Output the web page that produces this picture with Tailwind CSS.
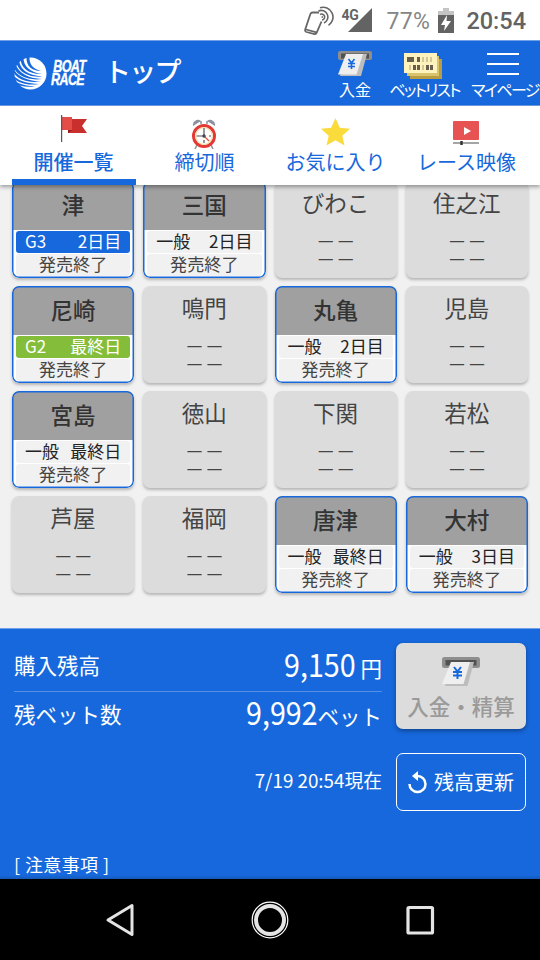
<!DOCTYPE html>
<html lang="ja">
<head>
    <meta charset="UTF-8">
    <meta name="viewport" content="width=device-width, initial-scale=1.0">
    <title>BOAT RACE トップ</title>
    <script src="https://cdn.jsdelivr.net/npm/@tailwindcss/browser@4"></script>
</head>
<body class="w-[540px] h-[960px] overflow-hidden bg-[#f1f1f1] font-['Noto_Sans_CJK_JP',sans-serif] flex flex-col">
    <!-- Status Bar -->
    <div class="h-[40px] shrink-0 bg-white flex items-center justify-end pr-3.5 pt-0.5 text-[#636363] font-['Roboto',sans-serif]">
        <svg class="w-[30px] h-[30px]" viewBox="0 0 30 30" fill="none" stroke="#666" stroke-width="1.800">
            <path d="M15 6.500H8.500Q7 6.500 6.400 8L1.200 23.500Q.8 25.500 2.500 26L10.500 28Q12 28.300 12.600 26.800L17.500 15.500" />
            <path d="M2 23.500l10.500 2.800" />
            <path d="M16 8.500a3 3 0 1 1 2 5.500M14.500 5a6.500 6.500 0 1 1 5.500 12M16 1.800a9.800 9.800 0 0 1 8.500 17.500M17.500 11h1.500" stroke-width="1.600" />
        </svg>
        <span class="text-[14px] font-bold ml-[7px] -mt-[13px] leading-none w-[16px] tracking-tight">4G</span>
        <svg class="w-[24px] h-[24px] -ml-[9px] mt-[-3px]" viewBox="0 0 24 24"><path d="M24 0v24H0z" fill="#636363" /></svg>
        <span class="text-[23px] leading-none ml-[14px] text-[#858585] tracking-[0.4px]">77%</span>
        <svg class="w-[16px] h-[25px] ml-[8px] -mt-[2px]" viewBox="0 0 16 25">
            <path d="M5 0h6v3h5v5H0V3h5z" fill="#c4c4c4" />
            <path d="M0 7h16v18H0z" fill="#636363" />
            <path d="M9 7 3 17h4l-1 6 7-10H8.500z" fill="#fff" />
        </svg>
        <span class="text-[23.500px] leading-none ml-[12px] mt-[2px] font-medium">20:54</span>
    </div>

    <!-- Header -->
    <header class="h-[66px] shrink-0 bg-[#1668dc] border-t border-b border-[#6f9fe8] text-white flex items-center pl-3.5">
        <svg class="w-[33px] h-[33px]" viewBox="0 0 33 33">
            <circle cx="16.500" cy="16.500" r="16" fill="#fff" />
            <g fill="#1668dc">
                <path d="M12.500 0h3C15 7 19 12 27 14 18 14 12 9 12.500 0z" />
                <path d="M6.500 0h3C9 9 16 15.500 28 17 15 17.500 6 11 6.500 0z" />
                <path d="M2 2h3C5 12 14 18.500 28 19.500 13 21 2 13 2 2z" />
                <path d="M-1 8h3C5 16 14 21.500 28 22 13 24 1 18 -1 8z" />
                <path d="M-1 14l2 0C5 20 14 24 27 24.500 13 26.500 2 22 -1 14z" />
                <path d="M-1 20h2C6 24.500 14 26.500 25 27 13 28.800 3 26 -1 20z" />
                <path d="M1 25.500h2C8 28 14 29 21 29.200 13 30.500 5 29.500 1 25.500z" />
            </g>
        </svg>
        <div class="ml-[4px] w-[39px] font-['Liberation_Sans',sans-serif] font-bold italic text-[16.500px] leading-[13px] tracking-[-0.8px]">
            <div class="origin-left scale-x-[0.760] pl-[3px] w-[50px] [-webkit-text-stroke:0.4px_white]">BOAT</div>
            <div class="origin-left scale-x-[0.760] w-[50px] [-webkit-text-stroke:0.4px_white]">RACE</div>
        </div>
        <h1 class="ml-[14px] -mt-[5px] w-[90px] text-[27px] leading-none font-medium tracking-[-1.800px]">トップ</h1>
        <nav class="ml-auto flex text-[16px] leading-[18px] text-center whitespace-nowrap [font-feature-settings:'palt'] pt-[3px]">
            <div class="w-[50px] flex flex-col items-center">
                <svg class="w-[34px] h-[27px] mb-[2px]" viewBox="0 0 34 27">
                    <rect x="0" y="0" width="34" height="9" rx="2" fill="#8e8e8e" />
                    <rect x="3" y="2.500" width="28" height="5" fill="#515151" />
                    <path d="M9 3h20l-6 22H2z" fill="#bdbdbd" />
                    <path d="M8 3h17l-6.500 20.500H0z" fill="#eee" />
                    <path d="M10.500 8l3 4 3-4M13.500 12v6M10 12.500h7M10 15.500h7" fill="none" stroke="#1668dc" stroke-width="1.600" />
                </svg>
                <span>入金</span>
            </div>
            <div class="w-[90px] flex flex-col items-center">
                <svg class="w-[38px] h-[26px] mr-[5px] mt-[2px] mb-px" viewBox="0 0 38 26">
                    <path d="M6 6h32v20H6z" fill="#b89d45" />
                    <path d="M3 3h32v20H3z" fill="#d9c36c" />
                    <path d="M0 0h33v20H0z" fill="#fff3bd" />
                    <path d="M3 4h7v5H3zM13 4h3v5h-3zM9 12h3v5H9zM13 12h3v5h-3zM22 12h3v5h-3zM26 12h3v5h-3z" fill="#665f4c" />
                    <path d="M18 4h2v5h-2zM22 4h2v5h-2zM26 4h2v5h-2zM5 12h2v5H5zM18 12h2v5h-2z" fill="#d3c796" />
                </svg>
                <span class="tracking-[-1.750px] pr-px">ベットリスト</span>
            </div>
            <div class="w-[70px] flex flex-col items-center">
                <svg class="w-[32px] h-[24px] mt-px mb-[4px] mr-[4px]" viewBox="0 0 32 24"><path d="M0 2h32M0 12h32M0 22h32" stroke="#fff" stroke-width="2" /></svg>
                <span class="tracking-[-1.600px]">マイページ</span>
            </div>
        </nav>
    </header>

    <!-- Tabs -->
    <div class="h-[79px] shrink-0 relative z-10 bg-white shadow-[0_2px_4px_rgba(0,0,0,0.35)] px-2 grid grid-cols-4 text-[20px] leading-[24px] text-[#1668dc] text-center whitespace-nowrap">
        <div class="relative flex flex-col items-center pt-[9px] font-medium">
            <svg class="w-[26px] h-[28px] mb-[7px]" viewBox="0 0 26 28">
                <path d="M7 4h19l-5 7 5 7H7z" fill="#c92f2c" />
                <path d="M1 2h10v13H1z" fill="#e54c48" />
                <path d="M7 15h4l-4 3z" fill="#8e1d1b" />
                <path d="M.6 0v27" stroke="#4d5860" stroke-width="1.200" />
            </svg>
            開催一覧
            <div class="absolute bottom-0 left-[4px] w-[124px] h-[6px] bg-[#1668dc]"></div>
        </div>
        <div class="flex flex-col items-center pt-[13px]">
            <svg class="w-[26px] h-[30px] mb-[1px] mr-[1px]" viewBox="0 0 26 30">
                <path d="M2 7a5 5 0 0 1 8-5zM24 7a5 5 0 0 0-8-5z" fill="#8b919d" />
                <path d="M6 26l-2 4M20 26l2 4M10 2v3M16 2v3" stroke="#8b919d" stroke-width="1.500" />
                <circle cx="13" cy="17" r="10.500" fill="#fff" stroke="#e53935" stroke-width="3" />
                <circle cx="13" cy="17" r="8.300" fill="none" stroke="#f0dfaa" stroke-width="1.200" />
                <path d="M13 9v8M5.500 17h4M13 24v-3M20 17h-2M9 17h4" stroke="#555" stroke-width="1.200" />
                <path d="M13 17l5 5" stroke="#e5532e" stroke-width="1.200" />
                <circle cx="13" cy="17" r="1.700" fill="#445" />
            </svg>
            締切順
        </div>
        <div class="flex flex-col items-center pt-[12px]">
            <svg class="w-[29px] h-[28px] mb-[4px]" viewBox="0 0 29 28"><path d="M14.500 0l4.300 9.700L29 10.700l-7.700 7L23.500 27.500l-9-5.200-9 5.200 2.200-9.800L0 10.700l10.200-1z" fill="#fadb3c" /></svg>
            お気に入り
        </div>
        <div class="flex flex-col items-center pt-[15px]">
            <svg class="w-[26px] h-[24px] mb-[5px] mr-[2px]" viewBox="0 0 26 24">
                <rect width="26" height="19" rx="1" fill="#e75252" />
                <path d="M11 6l7 4-7 4z" fill="#fff" />
                <path d="M0 22h26" stroke="#9b9b9b" stroke-width="1.800" />
                <path d="M8.500 20v4" stroke="#333" stroke-width="2.500" />
            </svg>
            レース映像
        </div>
    </div>

    <!-- Venue Grid -->
    <main class="h-[447px] shrink-0 -mt-[4px] px-[12px] grid grid-cols-4 auto-rows-[97px] gap-x-[9px] gap-y-[8px]" id="venue-list"></main>

    <!-- Balance Panel -->
    <section class="h-[251px] shrink-0 border-t border-[#6f9fe8] text-white px-3.5 flex gap-[14px] bg-linear-to-t from-[#1459b8] from-0% to-[#1668dc] to-[1.500%]">
        <div class="w-[368px] flex flex-col">
            <div class="h-[63px] pt-[9px] flex items-center justify-between border-b border-[#5590e6] text-[21.500px] leading-none">
                <span>購入残高</span>
                <span class="-mt-[2px]"><span class="inline-block origin-right scale-x-[0.910] text-[31.500px] leading-none">9,150</span> 円</span>
            </div>
            <div class="h-[44px] pb-px flex items-center justify-between text-[21.500px] leading-none">
                <span>残ベット数</span>
                <span class="-mt-[3px]"><span class="inline-block origin-right scale-x-[0.910] text-[31.500px] leading-none">9,992</span>ベット</span>
            </div>
            <div class="mt-[33px] text-right text-[18.800px] leading-[22px]">7/19 20:54現在</div>
            <div class="mt-auto mb-[4px] text-[18px] leading-[22px] tracking-[0.400px]">[ 注意事項 ]</div>
        </div>
        <div class="w-[130px] pt-[14px] flex flex-col">
            <button class="h-[86px] w-[130px] rounded-[7px] bg-[#dcdcdc] text-[#9a9a9a] shadow-[0_2px_4px_rgba(0,0,0,0.35)] flex flex-col items-center pt-[14px] text-[21.500px] leading-[30px] font-medium">
                <svg class="w-[38px] h-[30px] mb-[4px] shrink-0" viewBox="0 0 38 30">
                    <rect x="0" y="0" width="38" height="11" rx="2.500" fill="#8e8e8e" />
                    <rect x="3.500" y="3" width="31" height="5.500" fill="#515151" />
                    <path d="M12 5h20l-6.500 24H3z" fill="#bdbdbd" />
                    <path d="M9 5h19l-6.500 22H0z" fill="#efefef" />
                    <path d="M12 10l3.500 4.500L19 10M15.500 14v8M11 15h9M11 18.500h9" fill="none" stroke="#1668dc" stroke-width="2" />
                </svg>
                入金・精算
            </button>
            <button class="mt-[24px] h-[58px] w-[130px] rounded-[7px] border-[1.500px] border-white flex items-center justify-center gap-[7px] pb-px text-[20px] leading-none whitespace-nowrap">
                <svg class="w-[19px] h-[24px]" viewBox="0 0 19 24" fill="none" stroke="#fff" stroke-width="2.500">
                    <path d="M1.500 14a8 8 0 1 0 8-8H7" />
                    <path d="M10 1v10L4 6z" fill="#fff" stroke="none" />
                </svg>
                残高更新
            </button>
        </div>
    </section>

    <!-- Navigation Bar -->
    <footer class="h-[81px] shrink-0 bg-black flex items-center justify-between px-[100px]">
        <svg class="w-[40px] h-[40px]" viewBox="0 0 40 40"><path d="M32 5.500v29L8 20z" fill="none" stroke="#e4e4e4" stroke-width="3" stroke-linejoin="round" /></svg>
        <svg class="w-[40px] h-[40px]" viewBox="0 0 40 40" fill="none"><circle cx="20" cy="20" r="17.800" stroke="#fff" stroke-width="1.200" /><circle cx="20" cy="20" r="14" stroke="#e4e4e4" stroke-width="4" /></svg>
        <svg class="w-[40px] h-[40px]" viewBox="0 0 40 40"><rect x="8" y="7.500" width="24.500" height="25.500" rx="1" fill="none" stroke="#e4e4e4" stroke-width="3.200" /></svg>
    </footer>

    <script>
        const venues = [
            { name: '津', grade: 'G3', day: '2日目' },
            { name: '三国', grade: '一般', day: '2日目' },
            { name: 'びわこ' },
            { name: '住之江' },
            { name: '尼崎', grade: 'G2', day: '最終日' },
            { name: '鳴門' },
            { name: '丸亀', grade: '一般', day: '2日目' },
            { name: '児島' },
            { name: '宮島', grade: '一般', day: '最終日' },
            { name: '徳山' },
            { name: '下関' },
            { name: '若松' },
            { name: '芦屋' },
            { name: '福岡' },
            { name: '唐津', grade: '一般', day: '最終日' },
            { name: '大村', grade: '一般', day: '3日目' }
        ];

        const gradeColors = {
            'G3': 'bg-[#1668dc] text-white',
            'G2': 'bg-[#84bd3a] text-white',
            '一般': 'bg-[#f1f1f1] text-[#222]'
        };

        // Venues without a race today only show dashes
        document.getElementById('venue-list').innerHTML = venues.map(venue => venue.grade ? `
            <div class="relative rounded-[7px] bg-white overflow-hidden shadow-[0_2px_3px_rgba(0,0,0,0.25)] flex flex-col">
                <div class="h-[49px] shrink-0 bg-[#a0a0a0] text-[#333] text-[22.500px] leading-[46px] font-medium text-center">${venue.name}</div>
                <div class="mx-[4px] mt-[1px] h-[22px] shrink-0 rounded-[3px] px-[9px] flex justify-between text-[17px] leading-[20px] whitespace-nowrap ${gradeColors[venue.grade]}">
                    <span>${venue.grade}</span><span>${venue.day}</span>
                </div>
                <div class="mx-[4px] mt-[1px] h-[22px] shrink-0 rounded-[3px] bg-[#f1f1f1] text-[#444] text-[17.200px] leading-[20px] text-center">発売終了</div>
                <div class="absolute inset-0 rounded-[7px] shadow-[inset_0_0_0_1.5px_#1668dc]"></div>
            </div>` : `
            <div class="rounded-[7px] bg-[#dcdcdc] text-[#444] shadow-[0_2px_3px_rgba(0,0,0,0.25)] text-center">
                <div class="text-[22.500px] leading-[43px]">${venue.name}</div>
                <div class="pt-[8px] pl-px text-[19.500px] leading-[18px] tracking-[0.500px]">－－<br>－－</div>
            </div>`).join('');
    </script>
</body>
</html>
